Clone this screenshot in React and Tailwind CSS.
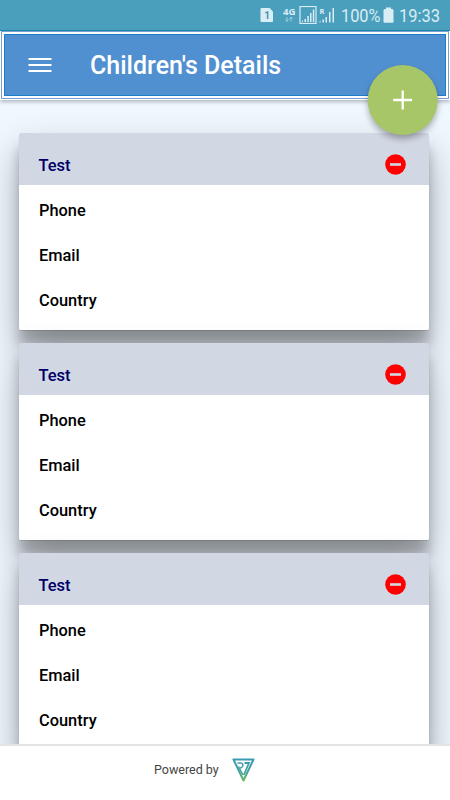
function StatusBar() {
  return (
    <div className="flex h-[31px] shrink-0 items-center border-b border-[#1c8aad] bg-[#4a9fbd] pl-[260px] text-[#d9edf4]">
      <svg className="h-4 w-[14px] shrink-0" viewBox="0 0 14 16">
        <path d="M1.500 1h8L13 4.500V14q0 1-1 1H1.500q-1 0-1-1V2q0-1 1-1Z" fill="#d9edf4" />
        <text x="7" y="11.500" textAnchor="middle" fontSize="10" fontWeight="700" fontFamily="Roboto, sans-serif" fill="#3e96b5">1</text>
      </svg>
      <svg className="ml-[9px] h-5 w-[13px] shrink-0 overflow-visible" viewBox="0 0 13 20">
        <text x="0" y="10" fontSize="9" fontWeight="700" fontFamily="'Open Sans', sans-serif" textLength="12.500" lengthAdjust="spacingAndGlyphs" fill="#d9edf4">4G</text>
        <path d="M4 12v4.500M2.500 14.500 4 16.500l1.500-2M8 16.500V12M6.500 14 8 12l1.500 2" fill="none" stroke="#9bccdc" strokeWidth="1" />
      </svg>
      <svg className="ml-[3px] h-[18px] w-[18px] shrink-0" viewBox="0 0 18 18">
        <rect x="1" y="0.500" width="16" height="17" fill="none" stroke="#d9edf4" strokeWidth="1.200" />
        <path d="M3 16v-1l1-1v2zM5.500 16v-3h1.500v3zM8.300 16v-6h1.500v6zM11 16V7h1.500v9zM13.800 16V3.500h1.500V16z" fill="#d9edf4" />
      </svg>
      <svg className="ml-0.5 h-[18px] w-4 shrink-0 overflow-visible" viewBox="0 0 16 18">
        <text x="0.500" y="7.500" fontSize="7.500" fontWeight="700" fontFamily="'Open Sans', sans-serif" fill="#d9edf4">R</text>
        <path d="M0.500 16.500v-1l1-1v2zM3.500 16.500v-3H5v3zM6.500 16.500v-5.500H8v5.500zM10 16.500V6h1.500v10.500zM13.500 16.500V2H15v14.500z" fill="#d9edf4" />
      </svg>
      <div className="ml-[5.500px] w-[39px] shrink-0 pt-px">
        <span className="block w-[44px] origin-left scale-x-[0.86] text-[19px] leading-[22px] whitespace-nowrap">100%</span>
      </div>
      <svg className="ml-[3.500px] h-4 w-[11px] shrink-0" viewBox="0 0 11 16">
        <path d="M3 0.500h5v1.500h1.500l1 1V15q0 .7-.7.700H1.200q-.7 0-.7-.7V3l1-1H3z" fill="#d9edf4" />
      </svg>
      <span className="ml-[4.500px] block w-[46px] origin-left scale-x-[0.87] pt-px text-[19px] leading-[22px] whitespace-nowrap">19:33</span>
    </div>
  );
}

function Header() {
  return (
    <header className="relative z-10 h-[69px] shrink-0 bg-white px-px pb-px shadow-[0_2px_4px_rgba(0,0,0,0.25)]">
      <div className="h-full border border-[#7a9fd2] bg-white p-0.5">
        <div className="flex h-full items-center border border-[#1e7dc8] bg-[#5190d0] pl-[23px]">
          <svg className="h-4 w-[24px]" viewBox="0 0 24 16">
            <path d="M0.500 2h23M0.500 8h23M0.500 14h23" stroke="#fff" strokeWidth="2.200" />
          </svg>
          <h1 className="ml-[38px] text-[25px] leading-none font-medium text-white">Children's Details</h1>
        </div>
      </div>
      <button aria-label="Add" className="absolute top-[34px] right-[12.500px] flex h-[70px] w-[70px] -translate-x-[0.3px] items-center justify-center rounded-full bg-[#a6c667] shadow-[0_4px_6px_rgba(0,0,0,0.3)]">
        <svg className="h-5 w-5" viewBox="0 0 20 20">
          <path d="M0.500 10h19M10 0.500v19" stroke="#fff" strokeWidth="2.300" />
        </svg>
      </button>
    </header>
  );
}

function ChildCard({ name }) {
  return (
    <section className="h-[197px] shrink-0 rounded-[2px] shadow-[0_19px_38px_rgba(0,0,0,0.30),0_15px_12px_rgba(0,0,0,0.22),0_1px_1px_rgba(0,0,0,0.12)]">
      <div className="flex h-[52px] items-center justify-between rounded-t-[2px] bg-[#d1d7e3] pt-[13px] pr-[23.500px] pl-[19.500px]">
        <span className="pt-px text-[16.500px] leading-5 font-medium text-[#000066]">{name}</span>
        <svg className="-mt-0.5 h-[21px] w-[21px]" viewBox="0 0 21 21">
          <circle cx="10.500" cy="10.500" r="10.300" fill="#f00" />
          <path d="M5 10.500h11" stroke="#d1d7e3" strokeWidth="2.600" />
        </svg>
      </div>
      <div className="flex h-[145px] flex-col rounded-b-[2px] bg-white pt-1 pl-5 text-[16.400px] font-medium text-black">
        {["Phone", "Email", "Country"].map((label) => (
          <div key={label} className="flex h-[45px] items-center">{label}</div>
        ))}
      </div>
    </section>
  );
}

export default function App() {
  return (
    <div className="flex h-[800px] w-[450px] flex-col overflow-hidden bg-[#eff7ff] font-[Roboto,sans-serif]">
      <StatusBar />
      <Header />
      <main className="flex min-h-0 flex-1 flex-col gap-[13px] overflow-hidden pt-[33px] pr-[21px] pl-[19px]">
        <ChildCard name="Test" />
        <ChildCard name="Test" />
        <ChildCard name="Test" />
      </main>
      <footer className="relative flex h-[56px] shrink-0 items-center border-t-2 border-[#e2e4e6] bg-white pl-[154px]">
        <span className="w-[65px] pb-[7px] text-[12.500px] leading-5 whitespace-nowrap text-[#444]">Powered by</span>
        <svg className="mb-1.5 ml-[13px] h-6 w-[23px]" viewBox="0 0 23 24">
          <defs>
            <linearGradient id="logo" gradientUnits="userSpaceOnUse" x1="0" y1="0" x2="0" y2="24">
              <stop offset="0" stopColor="#379bb8" />
              <stop offset="0.600" stopColor="#48a29a" />
              <stop offset="1" stopColor="#6fbf55" />
            </linearGradient>
          </defs>
          <path d="M1.500 1.500h20L11.500 22.500z" fill="none" stroke="url(#logo)" strokeWidth="2" strokeLinejoin="round" />
          <path d="M5.500 5H8.500q3.500 .5 2 3.500-.8 1.500-2.500 1.500M6.500 8.500l4.500 8.500" fill="none" stroke="url(#logo)" strokeWidth="1.500" />
          <path d="M12.500 5h4.500l-5.200 12" fill="none" stroke="url(#logo)" strokeWidth="1.800" />
        </svg>
      </footer>
    </div>
  );
}
